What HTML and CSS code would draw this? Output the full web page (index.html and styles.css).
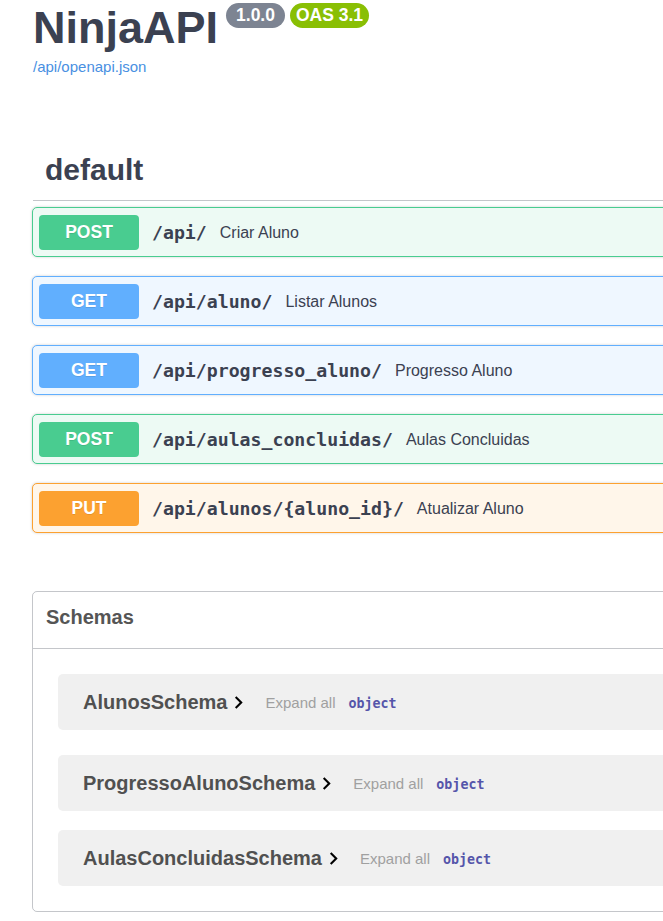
FILE: index.html
```html
<!DOCTYPE html>
<html>
<head>
<meta charset="utf-8">
<link rel="stylesheet" href="styles.css">
</head>
<body>
<div class="page">
  <div class="info">
    <div class="title-row">
      <h1 class="title">NinjaAPI</h1>
      <span class="badge badge-version">1.0.0</span>
      <span class="badge badge-oas">OAS 3.1</span>
    </div>
    <a class="spec-link" href="#">/api/openapi.json</a>
  </div>

  <h3 class="tag">default</h3>

  <div class="ops">
    <div class="op op-post">
      <span class="method">POST</span>
      <span class="path">/api/</span>
      <span class="summary">Criar Aluno</span>
    </div>
    <div class="op op-get">
      <span class="method">GET</span>
      <span class="path">/api/aluno/</span>
      <span class="summary">Listar Alunos</span>
    </div>
    <div class="op op-get">
      <span class="method">GET</span>
      <span class="path">/api/progresso_aluno/</span>
      <span class="summary">Progresso Aluno</span>
    </div>
    <div class="op op-post">
      <span class="method">POST</span>
      <span class="path">/api/aulas_concluidas/</span>
      <span class="summary">Aulas Concluidas</span>
    </div>
    <div class="op op-put">
      <span class="method">PUT</span>
      <span class="path">/api/alunos/{aluno_id}/</span>
      <span class="summary">Atualizar Aluno</span>
    </div>
  </div>

  <section class="models">
    <h4 class="models-title">Schemas</h4>
    <div class="models-list">
      <div class="model model-first">
        <span class="model-name">AlunosSchema</span>
        <svg class="chev" viewBox="0 0 24 24" width="25" height="25"><path d="M10 6L8.59 7.41 13.17 12l-4.58 4.59L10 18l6-6z"/></svg>
        <span class="expand">Expand all</span>
        <span class="type">object</span>
      </div>
      <div class="model">
        <span class="model-name">ProgressoAlunoSchema</span>
        <svg class="chev" viewBox="0 0 24 24" width="25" height="25"><path d="M10 6L8.59 7.41 13.17 12l-4.58 4.59L10 18l6-6z"/></svg>
        <span class="expand">Expand all</span>
        <span class="type">object</span>
      </div>
      <div class="model">
        <span class="model-name">AulasConcluidasSchema</span>
        <svg class="chev" viewBox="0 0 24 24" width="25" height="25"><path d="M10 6L8.59 7.41 13.17 12l-4.58 4.59L10 18l6-6z"/></svg>
        <span class="expand">Expand all</span>
        <span class="type">object</span>
      </div>
    </div>
  </section>
</div>
</body>
</html>
```
FILE: styles.css
```css
html, body {
  margin: 0;
  padding: 0;
  background: #fff;
  overflow: hidden;
}
body {
  font-family: "Liberation Sans", Arial, sans-serif;
  color: #3b4151;
}
.page {
  width: 1100px;
  padding-left: 32px;
}
.info {
  padding-top: 2px;
  padding-left: 1px;
}
.title-row {
  display: flex;
  align-items: flex-start;
}
.title {
  margin: 0;
  font-size: 45px;
  line-height: 52px;
  font-weight: bold;
  color: #3b4151;
}
.badge {
  margin-top: 1px;
  height: 25px;
  line-height: 25px;
  border-radius: 13px;
  font-size: 17.5px;
  font-weight: bold;
  color: #fff;
}
.badge-version {
  background: #7d8492;
  padding: 0 10px;
  margin-left: 8px;
}
.badge-oas {
  background: #89bf04;
  padding: 0 6px;
  margin-left: 5px;
}
.spec-link {
  display: block;
  margin-top: 4px;
  font-size: 15px;
  line-height: 18px;
  color: #4990e2;
  text-decoration: none;
}
.tag {
  margin: 64px 0 6px 1px;
  padding: 12px 25px 12px 12px;
  font-size: 30px;
  line-height: 36px;
  font-weight: bold;
  color: #3b4151;
  border-bottom: 1px solid rgba(59, 65, 81, 0.3);
}
.ops {
  display: flex;
  flex-direction: column;
  gap: 19px;
}
.op {
  display: flex;
  align-items: center;
  padding: 7px 6px 6px 6px;
  border: 1px solid;
  border-radius: 5px;
  box-shadow: 0 0 3px rgba(0, 0, 0, 0.19);
}
.method {
  width: 100px;
  height: 35px;
  line-height: 35px;
  text-align: center;
  border-radius: 4px;
  color: #fff;
  font-size: 17.5px;
  font-weight: bold;
  text-shadow: 0 1px 0 rgba(0, 0, 0, 0.1);
}
.path {
  margin-left: 13px;
  padding-right: 13px;
  font-family: "DejaVu Sans Mono", monospace;
  font-weight: bold;
  font-size: 18.2px;
  color: #3b4151;
}
.summary {
  font-size: 16px;
  color: #3b4151;
}
.op-post { border-color: #49cc90; background: #edfaf4; }
.op-post .method { background: #49cc90; }
.op-get { border-color: #61affe; background: #eff7ff; }
.op-get .method { background: #61affe; }
.op-put { border-color: #fca130; background: #fff6ea; }
.op-put .method { background: #fca130; }

.models {
  margin-top: 58px;
  border: 1px solid rgba(59, 65, 81, 0.3);
  border-radius: 5px;
}
.models-title {
  margin: 0;
  padding: 13px 13px 19px 13px;
  font-size: 20px;
  line-height: 24px;
  font-weight: bold;
  color: #555;
  border-bottom: 1px solid rgba(59, 65, 81, 0.3);
}
.models-list {
  display: flex;
  flex-direction: column;
  gap: 19px;
  padding: 25px 0 25px 25px;
}
.model {
  display: flex;
  align-items: center;
  height: 56px;
  padding-left: 25px;
  background: #f0f0f0;
  border-radius: 5px;
}
.model-first {
  margin-bottom: 6px;
}
.model-name {
  font-size: 20px;
  font-weight: bold;
  color: #505050;
}
.chev {
  margin-left: -1px;
  fill: #000;
}
.expand {
  margin-left: 14px;
  font-size: 15px;
  color: #a0a0a0;
}
.type {
  margin-left: 13px;
  margin-top: 3px;
  font-family: "DejaVu Sans Mono", monospace;
  font-weight: bold;
  font-size: 13.3px;
  color: #55a;
}
```
